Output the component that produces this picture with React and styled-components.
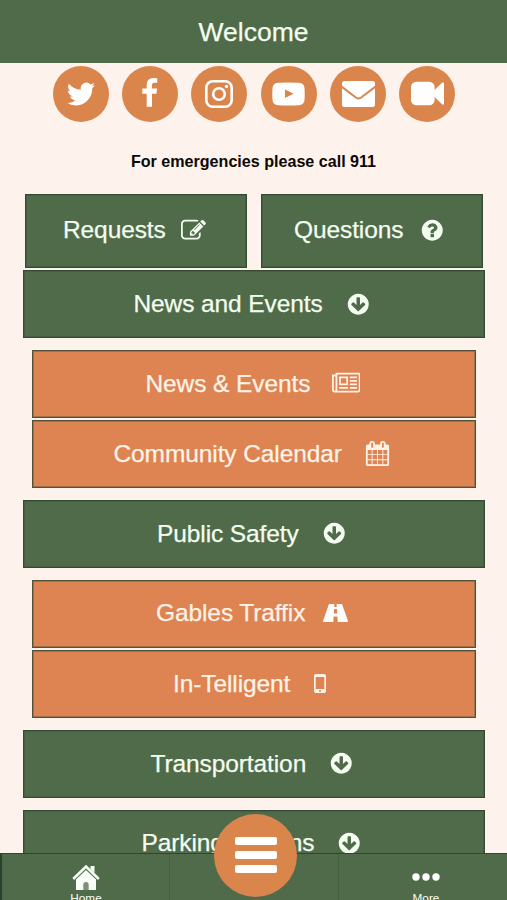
import React from 'react'
import styled, { createGlobalStyle } from 'styled-components'

const GlobalStyle = createGlobalStyle`
*{box-sizing:border-box;}
body{
margin:0;
background:#fdf2ec;
font-family:"Liberation Sans",Arial,sans-serif;
overflow:hidden;
}
`
const Container = styled.div`
height:900px;
display:flex;
flex-direction:column;
position:relative;
overflow:hidden;
background:#fdf2ec;
`
const Header = styled.header`
height:62.5px;
flex:none;
display:flex;
align-items:center;
justify-content:center;
padding-top:3px;
background:#506b49;
color:#f3fdf0;
font-size:26.5px;
-webkit-text-stroke:.25px currentColor;
`
const Socials = styled.div`
flex:none;
display:flex;
justify-content:center;
gap:13.4px;
padding:3px 0 0 1px;
`
const Social = styled.a`
width:56px;
height:56px;
border-radius:50%;
background:#da854b;
color:#fff;
display:flex;
align-items:center;
justify-content:center;
`
const Notice = styled.p`
flex:none;
margin:30px 0 0;
height:19px;
line-height:19px;
text-align:center;
font-size:16.1px;
font-weight:700;
color:#0b0807;
`
const Menu = styled.main`
flex:1;
min-height:0;
overflow:hidden;
padding:23.4px 22px 0 22.5px;
display:flex;
flex-direction:column;
`
const Pair = styled.div`
flex:none;
display:flex;
gap:13.5px;
padding:0 2.5px;
margin-bottom:2.5px;
`
const Group = styled.div`
flex:none;
display:flex;
flex-direction:column;
gap:2.5px;
padding:0 9px;
margin:12px 0;
`
const Button = styled.div`
flex:none;
height:${p => p.$tall ? 74 : 67.8}px;
${p => p.$tall && 'width:222px;'}
display:flex;
align-items:center;
gap:${p => p.$gap}px;
padding-left:${p => p.$start}px;
padding-bottom:1px;
border:1px solid ${p => p.$orange ? '#4f5238' : '#334a33'};
box-shadow:inset 0 0 0 1px ${p => p.$orange ? 'rgba(79,82,56,.4)' : 'rgba(51,74,51,.35)'};
background:${p => p.$orange ? '#dd8452' : '#506b49'};
color:${p => p.$orange ? '#fff3e8' : '#f3fdf0'};
font-size:24.5px;
letter-spacing:-.1px;
-webkit-text-stroke:.25px currentColor;
white-space:nowrap;
svg{-webkit-text-stroke:0;}
`
const Spacer = styled.div`
height:12px;
flex:none;
`
const TabBar = styled.nav`
flex:none;
height:47px;
display:grid;
grid-template-columns:168px 169px 1fr;
background:#506b49;
border-top:1.5px solid #30472f;
border-left:2px solid #2b422c;
`
const Tab = styled.div`
display:flex;
flex-direction:column;
align-items:center;
border-right:1px solid #466141;
color:#f8fff6;
font-size:11.8px;
line-height:13px;
padding:10px 0 0 1px;
&:last-child{border-right:0;padding-left:6px;}
svg{flex:none;margin-bottom:1px;}
`
const MenuButton = styled.div`
position:absolute;
left:214px;
top:813.5px;
width:83px;
height:83px;
border-radius:50%;
background:#da854b;
display:flex;
flex-direction:column;
align-items:center;
justify-content:center;
gap:6.5px;
`
const Bar = styled.span`
width:42px;
height:7.5px;
border-radius:2px;
background:#fff;
`
const Glyph = styled.svg`
flex:none;
`

const Icon = ({ d, size = 25, box = '0 0 1792 1792', width }) => (
  <Glyph width={width || size} height={size} viewBox={box} fill="currentColor">
    <path fillRule="evenodd" d={d} />
  </Glyph>
)

const disc = 'M1664 896q0 209-103 385.5t-279.5 279.5-385.5 103-385.5-103-279.5-279.5-103-385.5 103-385.5 279.5-279.5 385.5-103 385.5 103 279.5 279.5 103 385.5z'
const paths = {
  twitter: 'M1684 408q-67 98-162 167 1 14 1 42 0 130-38 259.5t-115.5 248.5-184.5 210.5-258 146-323 54.5q-271 0-496-145 35 4 78 4 225 0 401-138-105-2-188-64.5t-114-159.5q33 5 61 5 43 0 85-11-112-23-185.5-111.5t-73.5-205.5v-4q68 38 146 41-66-44-105-115t-39-154q0-88 44-163 121 149 294.5 238.5t371.5 99.5q-8-38-8-74 0-134 94.5-228.5t228.5-94.5q140 0 236 102 109-21 205-78-37 115-142 178 93-10 186-50z',
  facebook: 'M1343 12v264h-157q-86 0-116 36t-30 108v189h293l-39 296h-254v759h-306v-759h-255v-296h255v-218q0-186 104-288.5t277-102.5q147 0 228 12z',
  video: 'M1792 352v1088q0 42-39 59-13 5-25 5-27 0-45-19l-403-403v166q0 119-84.5 203.5t-203.5 84.5h-704q-119 0-203.5-84.5t-84.5-203.5v-704q0-119 84.5-203.5t203.5-84.5h704q119 0 203.5 84.5t84.5 203.5v165l403-402q18-19 45-19 12 0 25 5 39 17 39 59z',
  edit: 'M888 1184l116-116-152-152-116 116v56h96v96h56zm440-720q-16-16-33 1l-350 350q-17 17-1 33t33-1l350-350q17-17 1-33zm80 594v190q0 119-84.5 203.5t-203.5 84.5h-832q-119 0-203.5-84.5t-84.5-203.5v-832q0-119 84.5-203.5t203.5-84.5h832q63 0 117 25 15 7 18 23 3 17-9 29l-49 49q-14 14-32 8-23-6-45-6h-832q-66 0-113 47t-47 113v832q0 66 47 113t113 47h832q66 0 113-47t47-113v-126q0-13 9-22l64-64q15-15 35-7t20 29zm-96-738l288 288-672 672h-288v-288zm444 132l-92 92-288-288 92-92q28-28 68-28t68 28l152 152q28 28 28 68t-28 68z',
  question: 'M1024 1376v-192q0-14-9-23t-23-9h-192q-14 0-23 9t-9 23v192q0 14 9 23t23 9h192q14 0 23-9t9-23zm256-672q0-88-55.5-163t-138.5-116-170-41q-243 0-371 213-15 24 8 42l132 100q7 6 19 6 16 0 25-12 53-68 86-92 34-24 86-24 48 0 85.5 26t37.5 59q0 38-20 61t-68 45q-63 28-115.5 86.5t-52.5 125.5v36q0 14 9 23t23 9h192q14 0 23-9t9-23q0-19 21.5-49.5t54.5-49.5q32-18 49-28.5t46-35 44.5-48 28-60.5 12.5-81z' + disc,
  down: 'M1412 897q0-27-18-45l-91-91q-18-18-45-18t-45 18l-189 189v-502q0-26-19-45t-45-19h-128q-26 0-45 19t-19 45v502l-189-189q-19-19-45-19t-45 19l-91 91q-18 18-18 45t18 45l362 362 91 91q18 18 45 18t45-18l91-91 362-362q18-18 18-45z' + disc,
  news: 'M1024 512h-384v384h384v-384zm128 640v128h-640v-128h640zm0-768v640h-640v-640h640zm640 768v128h-512v-128h512zm0-256v128h-512v-128h512zm0-256v128h-512v-128h512zm0-256v128h-512v-128h512zm-1536 960v-960h-128v960q0 26 19 45t45 19 45-19 19-45zm1664 0v-1088h-1536v1088q0 33-11 64h1483q26 0 45-19t19-45zm128-1216v1216q0 80-56 136t-136 56h-1664q-80 0-136-56t-56-136v-1088h256v-128h1792z',
  calendar: 'M192 1664h288v-288h-288v288zm352 0h320v-288h-320v288zm-352-352h288v-320h-288v320zm352 0h320v-320h-320v320zm-352-384h288v-288h-288v288zm736 736h320v-288h-320v288zm-384-736h320v-288h-320v288zm768 736h288v-288h-288v288zm-384-352h320v-320h-320v320zm-352-864v-288q0-13-9.5-22.5t-22.5-9.5h-64q-13 0-22.5 9.5t-9.5 22.5v288q0 13 9.5 22.5t22.5 9.5h64q13 0 22.5-9.5t9.5-22.5zm736 864h288v-320h-288v320zm-384-384h320v-288h-320v288zm384 0h288v-288h-288v288zm32-480v-288q0-13-9.5-22.5t-22.5-9.5h-64q-13 0-22.5 9.5t-9.5 22.5v288q0 13 9.5 22.5t22.5 9.5h64q13 0 22.5-9.5t9.5-22.5zm384-64v1280q0 52-38 90t-90 38h-1408q-52 0-90-38t-38-90v-1280q0-52 38-90t90-38h128v-96q0-66 47-113t113-47h64q66 0 113 47t47 113v96h384v-96q0-66 47-113t113-47h64q66 0 113 47t47 113v96h128q52 0 90 38t38 90z',
}

const Down = () => <Icon d={paths.down} size={24.5} />

const Instagram = () => (
  <svg width="28" height="28" viewBox="0 0 28 28" fill="none" stroke="#fff" strokeWidth="2.6">
    <rect x="1.3" y="1.3" width="25.4" height="25.4" rx="6.5" />
    <circle cx="14" cy="14" r="5.8" />
    <circle cx="21.5" cy="6.5" r="1.7" fill="#fff" stroke="none" />
  </svg>
)

const Youtube = () => (
  <svg width="33" height="24" viewBox="0 0 33 24">
    <path fill="#fff" fillRule="evenodd" d="M6 .8Q16.500 0 27 .8Q32 1 32.500 6Q33 12 32.500 18Q32 23 27 23.200Q16.500 24 6 23.200Q1 23 .5 18Q0 12 .5 6Q1 1 6 .8ZM13 7.500V16L21.500 11.750Z" />
  </svg>
)

const Mail = () => (
  <svg width="33" height="26" viewBox="0 0 33 26">
    <rect width="33" height="26" rx="2.500" fill="#fff" />
    <path d="M-.5 5.500L13.500 16.300Q16.500 18.500 19.500 16.300L33.500 5.500" fill="none" stroke="#da854b" strokeWidth="2" />
  </svg>
)

const Road = () => (
  <svg width="25" height="18" viewBox="0 0 25 18" fill="#fff">
    <path fillRule="evenodd" d="M6 0H11.400L11.200 3H13.800L13.600 0H19L25 17Q25 18 24 18H14.700L14.400 12.500H10.600L10.300 18H1Q0 18 0 17ZM11.100 5L10.800 9.500H14.200L13.900 5Z" />
  </svg>
)

const Mobile = () => (
  <svg width="12" height="19" viewBox="0 0 12 19" fill="currentColor">
    <path fillRule="evenodd" d="M2 0H10Q12 0 12 2V17Q12 19 10 19H2Q0 19 0 17V2Q0 0 2 0ZM1.700 3V15H10.300V3ZM6 16A1 1 0 1 0 6 18A1 1 0 1 0 6 16Z" />
  </svg>
)

const Home = () => (
  <svg width="28" height="27" viewBox="0 0 28 27">
    <path fill="#f8fff6" d="M4 15L14 5.500L24 15V26H4Z" />
    <path fill="#f8fff6" d="M18.500 2H22.500V9L18.500 5Z" />
    <path d="M1.200 15L14 2.500L26.800 15" fill="none" stroke="#f8fff6" strokeWidth="2.600" />
    <path d="M3.500 15.500L14 5.500L24.500 15.500" fill="none" stroke="#506b49" strokeWidth=".9" />
    <path d="M11.300 26V20.500Q11.300 18 14 18T16.700 20.500V26Z" fill="#7d9179" />
  </svg>
)

const Dots = () => (
  <svg width="28" height="27" viewBox="0 0 28 27" fill="#fff">
    <circle cx="4" cy="13" r="3.700" />
    <circle cx="14" cy="13" r="3.700" />
    <circle cx="24" cy="13" r="3.700" />
  </svg>
)

const App = () => {
  return (
    <Container>
      <GlobalStyle />
      <Header>Welcome</Header>
      <Socials>
        <Social><Icon d={paths.twitter} size={32} /></Social>
        <Social><Icon d={paths.facebook} size={31} /></Social>
        <Social><Instagram /></Social>
        <Social><Youtube /></Social>
        <Social><Mail /></Social>
        <Social><Icon d={paths.video} size={33} /></Social>
      </Socials>
      <Notice>For emergencies please call 911</Notice>
      <Menu>
        <Pair>
          <Button $tall $start={37} $gap={15.5}>Requests <Icon d={paths.edit} /></Button>
          <Button $tall $start={32.5} $gap={17}>Questions <Icon d={paths.question} size={24.5} /></Button>
        </Pair>
        <Button $start={110} $gap={23}>News and Events <Down /></Button>
        <Group>
          <Button $orange $start={113} $gap={21.5}>News &amp; Events <Icon d={paths.news} box="0 0 2048 1792" width={28.5} /></Button>
          <Button $orange $start={81} $gap={23.5}>Community Calendar <Icon d={paths.calendar} /></Button>
        </Group>
        <Button $start={133.5} $gap={23.5}>Public Safety <Down /></Button>
        <Group>
          <Button $orange $start={123.5} $gap={18}>Gables Traffix <Road /></Button>
          <Button $orange $start={140.5} $gap={23.5}>In-Telligent <Mobile /></Button>
        </Group>
        <Button $start={127} $gap={23}>Transportation <Down /></Button>
        <Spacer />
        <Button $start={118} $gap={23}>Parking Options <Down /></Button>
      </Menu>
      <TabBar>
        <Tab><Home />Home</Tab>
        <Tab />
        <Tab><Dots />More</Tab>
      </TabBar>
      <MenuButton>
        <Bar />
        <Bar />
        <Bar />
      </MenuButton>
    </Container>
  )
}
export default App
